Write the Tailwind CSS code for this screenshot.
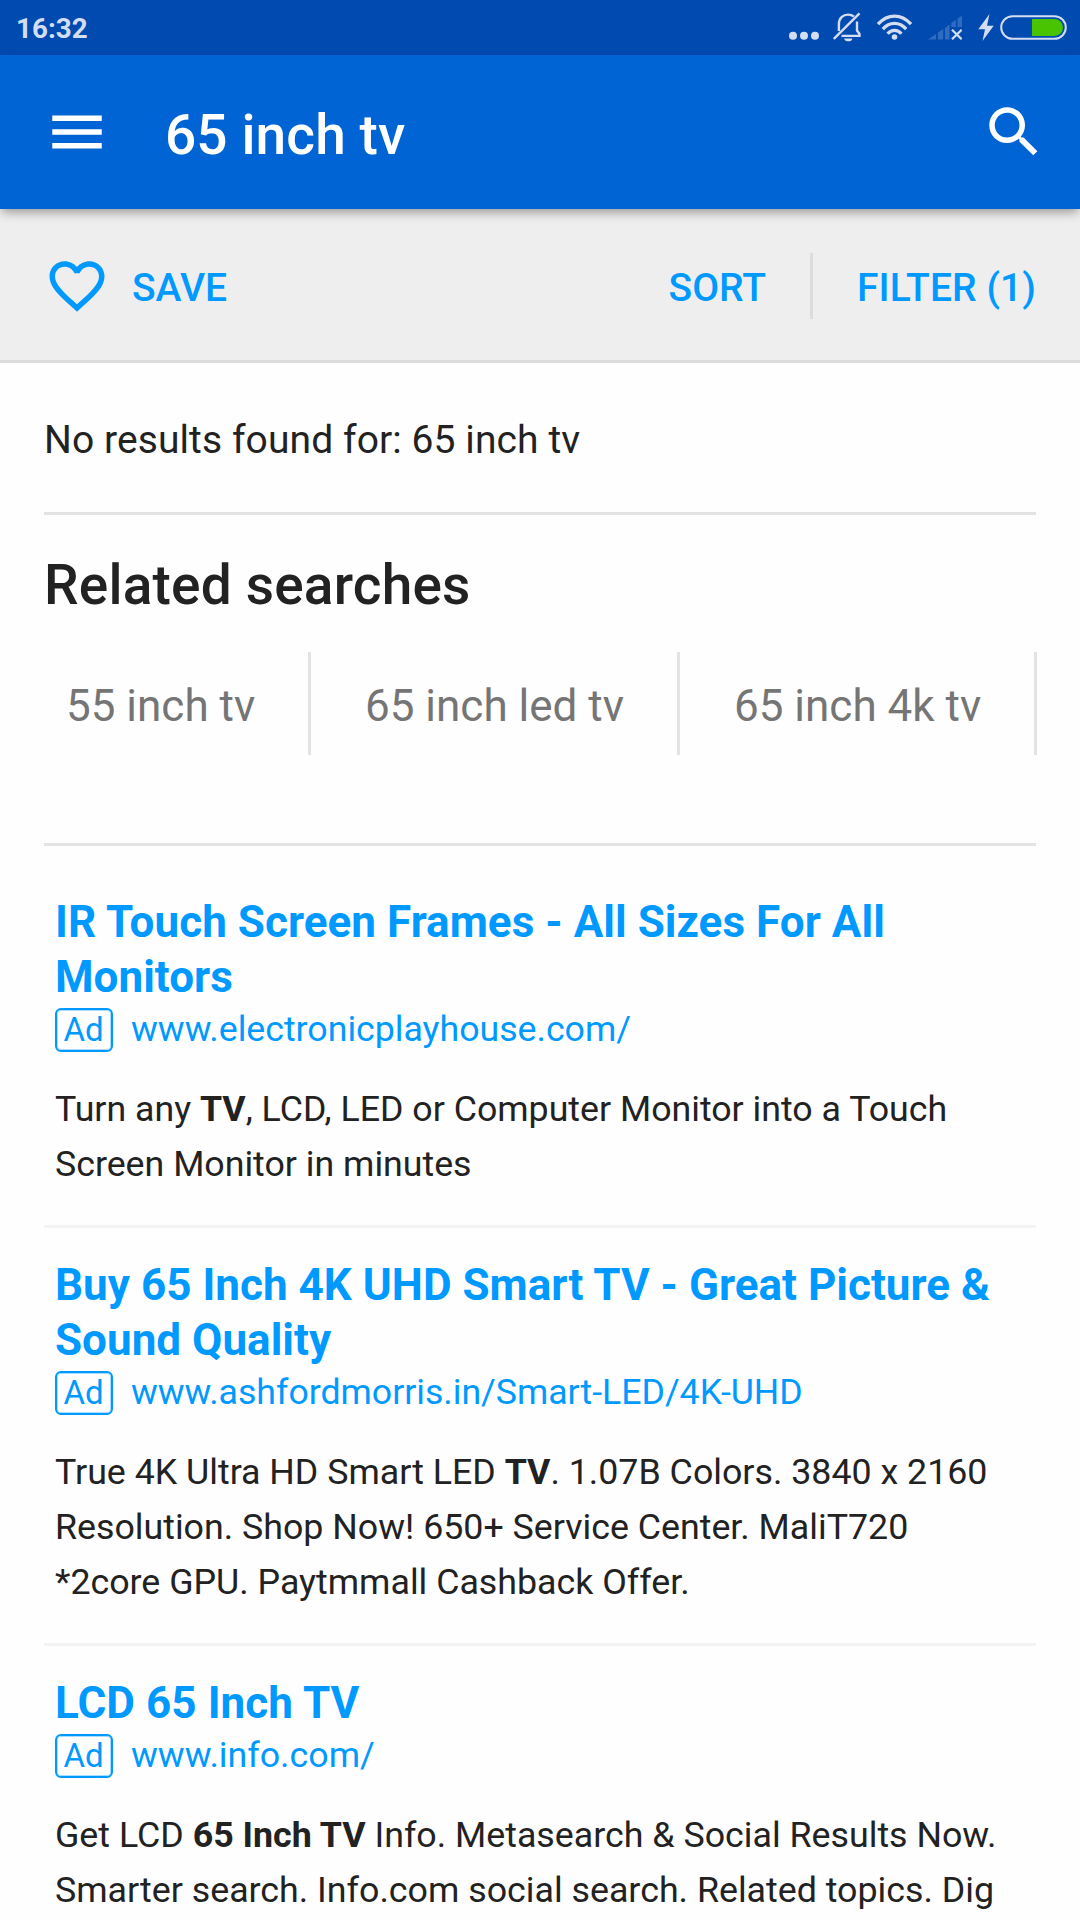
<!DOCTYPE html>
<html lang="en">
<head>
<meta charset="utf-8">
<title>65 inch tv</title>
<script src="https://cdn.jsdelivr.net/npm/@tailwindcss/browser@4"></script>
</head>
<body class="bg-white">
<div class="flex h-[1920px] w-[1080px] flex-col overflow-hidden bg-[#fefefe] font-[Roboto,sans-serif] text-[#222]">

  <!-- Status bar -->
  <div class="flex h-[55px] shrink-0 items-center bg-[#004ab0] pl-4 pr-[13px] text-[#d3def2]">
    <span class="mr-auto pt-[2px] text-[27.8px] leading-[55px] font-bold">16:32</span>
    <svg class="mr-[14px] h-[55px] w-[30px]" viewBox="789 0 30 55" fill="currentColor"><circle cx="793" cy="35.7" r="4"/><circle cx="804" cy="35.7" r="4"/><circle cx="815" cy="35.7" r="4"/></svg>
    <svg class="mr-4 h-[55px] w-[28px]" viewBox="833 0 28 55" fill="none" stroke="currentColor" stroke-width="2.4">
      <path d="M838.9 31V24C838.9 18 843 14.6 848 14.6C850.6 14.6 852.6 15.4 854 16.7"/>
      <path d="M857 21.500V30.500L859.500 34V35.900H841.500"/>
      <path d="M833.800 39L859.500 13.300"/>
      <path d="M844 38.500H852.500C852 40.500 850.500 41.300 848.300 41.300S844.600 40.500 844 38.500Z" fill="currentColor" stroke="none"/>
    </svg>
    <svg class="mr-4 h-[55px] w-[35px]" viewBox="877 0 35 55" fill="none" stroke="currentColor" stroke-width="3.3">
      <path d="M878 24.200C887.500 13.300 901.500 13.300 911 24.200"/>
      <path d="M882.800 29.200C889.500 21.500 899.500 21.500 906.200 29.200"/>
      <path d="M887.600 33.800C891.500 29.200 897.500 29.200 901.400 33.800"/>
      <circle cx="894.500" cy="37" r="2.800" fill="currentColor" stroke="none"/>
    </svg>
    <svg class="mr-4 h-[55px] w-[34px]" viewBox="928 0 34 55">
      <path fill="#2f6cc1" d="M928 39.500L936 34V39.500ZM938 32.500L943.200 29V39.500H938ZM945 28L949.500 24.500V39.500H945ZM951.300 23L955.800 19.700V27H951.300ZM957.500 18.500L962 15.800V27H957.500Z"/>
      <path fill="none" stroke="currentColor" stroke-width="2.300" d="M952 29.700L961.700 39.200M961.700 29.700L952 39.200"/>
    </svg>
    <svg class="mr-[6px] h-[55px] w-4" viewBox="978 0 16 55" fill="currentColor"><path d="M989.500 14L978.300 29.300H985L982.500 41L993.700 25.800H987Z"/></svg>
    <svg class="h-[55px] w-[67px]" viewBox="1000 0 67 55">
      <rect x="1001.200" y="16.200" width="64.600" height="22.600" rx="11.300" fill="none" stroke="currentColor" stroke-width="2"/>
      <path fill="#48c400" d="M1032 19H1054.500A8.500 8.500 0 0 1 1054.500 36H1032Z"/>
    </svg>
  </div>

  <!-- App bar -->
  <header class="relative z-10 flex h-[154px] shrink-0 items-center bg-[#0064d4] pl-[44px] pr-[33px] text-white shadow-[0_5px_10px_-2px_rgba(0,0,0,0.38)]">
    <svg class="size-[66px]" viewBox="0 0 24 24" fill="currentColor"><path d="M3 18h18v-2H3v2zm0-5h18v-2H3v2zm0-7v2h18V6H3z"/></svg>
    <h1 class="ml-[55px] mr-auto pt-[6px] text-[55px] leading-[64px] font-medium tracking-[0.1px]">65 inch tv</h1>
    <svg class="size-[66px]" viewBox="0 0 24 24" fill="currentColor"><path d="M15.5 14h-.79l-.28-.27C15.410 12.590 16 11.110 16 9.500 16 5.910 13.090 3 9.500 3S3 5.910 3 9.500 5.910 16 9.500 16c1.610 0 3.090-.590 4.230-1.570l.270.280v.790l5 4.990L20.490 19l-4.990-5zm-6 0C7.010 14 5 11.990 5 9.500S7.010 5 9.500 5 14 7.010 14 9.500 11.990 14 9.500 14z"/></svg>
  </header>

  <!-- Result actions -->
  <div class="flex h-[154px] shrink-0 items-center border-b-[3px] border-[#dcdcdc] bg-[#eee] pl-[44px] pr-[44px] text-[39px] leading-[46px] font-medium text-[#0099ff]">
    <svg class="mt-[3px] size-[66px]" viewBox="0 0 24 24" fill="currentColor"><path d="M16.500 3c-1.740 0-3.410.810-4.500 2.090C10.910 3.810 9.240 3 7.500 3 4.420 3 2 5.420 2 8.500c0 3.780 3.400 6.860 8.550 11.540L12 21.350l1.450-1.320C18.600 15.360 22 12.280 22 8.500 22 5.420 19.580 3 16.500 3zm-4.400 15.550l-.100.100-.100-.100C7.140 14.240 4 11.390 4 8.500 4 6.500 5.500 5 7.500 5c1.540 0 3.040.990 3.570 2.360h1.870C13.460 5.990 14.960 5 16.500 5c2 0 3.500 1.500 3.500 3.500 0 2.890-3.140 5.740-7.900 10.050z"/></svg>
    <span class="ml-[22px] mr-auto pt-[6px]">SAVE</span>
    <span class="pt-[6px]">SORT</span>
    <span class="ml-[44px] mr-[44px] mt-[3px] h-[66px] w-[3px] bg-[#dcdcdc]"></span>
    <span class="pt-[6px] tracking-[0.08px]">FILTER (1)</span>
  </div>

  <main class="mx-[44px]">
    <p class="border-b-[3px] border-[#e3e3e3] pt-[54px] pb-[49px] text-[39px] leading-[46px] tracking-[0.09px]">No results found for: 65 inch tv</p>

    <section class="border-b-[3px] border-[#e3e3e3] pt-[38px] pb-[88px]">
      <h2 class="text-[55px] leading-[64px] font-medium tracking-[0.19px]">Related searches</h2>
      <div class="mt-[35px] flex h-[103px] w-[993px] text-[44px] leading-[108px] text-[#757575]">
        <span class="w-[267px] border-r-[3px] border-[#e3e3e3] pl-[22px]">55 inch tv</span>
        <span class="w-[369px] border-r-[3px] border-[#e3e3e3] pl-[54px]">65 inch led tv</span>
        <span class="w-[357px] border-r-[3px] border-[#e3e3e3] pl-[54px]">65 inch 4k tv</span>
      </div>
    </section>

    <article class="border-b-[3px] border-[#f3f3f3] pt-[49px] pr-[11px] pb-[33px] pl-[11px]">
      <h3 class="text-[44px] leading-[55px] font-bold tracking-[0.05px] text-[#0099ff]">IR Touch Screen Frames - All Sizes For All<br>Monitors</h3>
      <div class="mt-[3px] flex h-[44px] items-baseline gap-[18px] text-[#0099ff]">
        <span class="h-[44px] w-[58px] rounded-[6px] border-2 border-[#0099ff] pr-px text-center text-[33px] leading-[40px] shadow-[inset_0_0_0_1px_#0099ff55]">Ad</span>
        <span class="text-[35.7px] leading-[42px]">www.electronicplayhouse.com/</span>
      </div>
      <p class="mt-[30px] text-[35.72px] leading-[55px]">Turn any <b>TV</b>, LCD, LED or Computer Monitor into a Touch<br>Screen Monitor in minutes</p>
    </article>

    <article class="border-b-[3px] border-[#f3f3f3] pt-[30px] pr-[11px] pb-[33px] pl-[11px]">
      <h3 class="text-[44px] leading-[55px] font-bold tracking-[0.025px] whitespace-nowrap text-[#0099ff]">Buy 65 Inch 4K UHD Smart TV - Great Picture &amp;<br>Sound Quality</h3>
      <div class="mt-[3px] flex h-[44px] items-baseline gap-[18px] text-[#0099ff]">
        <span class="h-[44px] w-[58px] rounded-[6px] border-2 border-[#0099ff] pr-px text-center text-[33px] leading-[40px] shadow-[inset_0_0_0_1px_#0099ff55]">Ad</span>
        <span class="text-[35.65px] leading-[42px]">www.ashfordmorris.in/Smart-LED/4K-UHD</span>
      </div>
      <p class="mt-[30px] text-[35.75px] leading-[55px]">True 4K Ultra HD Smart LED <b>TV</b>. 1.07B Colors. 3840 x 2160<br>Resolution. Shop Now! 650+ Service Center. MaliT720<br>*2core GPU. Paytmmall Cashback Offer.</p>
    </article>

    <article class="pt-[30px] pr-[11px] pl-[11px]">
      <h3 class="text-[44px] leading-[55px] font-bold tracking-[0.07px] text-[#0099ff]">LCD 65 Inch TV</h3>
      <div class="mt-[3px] flex h-[44px] items-baseline gap-[18px] text-[#0099ff]">
        <span class="h-[44px] w-[58px] rounded-[6px] border-2 border-[#0099ff] pr-px text-center text-[33px] leading-[40px] shadow-[inset_0_0_0_1px_#0099ff55]">Ad</span>
        <span class="text-[35.75px] leading-[42px]">www.info.com/</span>
      </div>
      <p class="mt-[30px] text-[35.77px] leading-[55px] whitespace-nowrap">Get LCD <b>65 Inch TV</b> Info. Metasearch &amp; Social Results Now.<br>Smarter search. Info.com social search. Related topics. Dig</p>
    </article>
  </main>
</div>
</body>
</html>
